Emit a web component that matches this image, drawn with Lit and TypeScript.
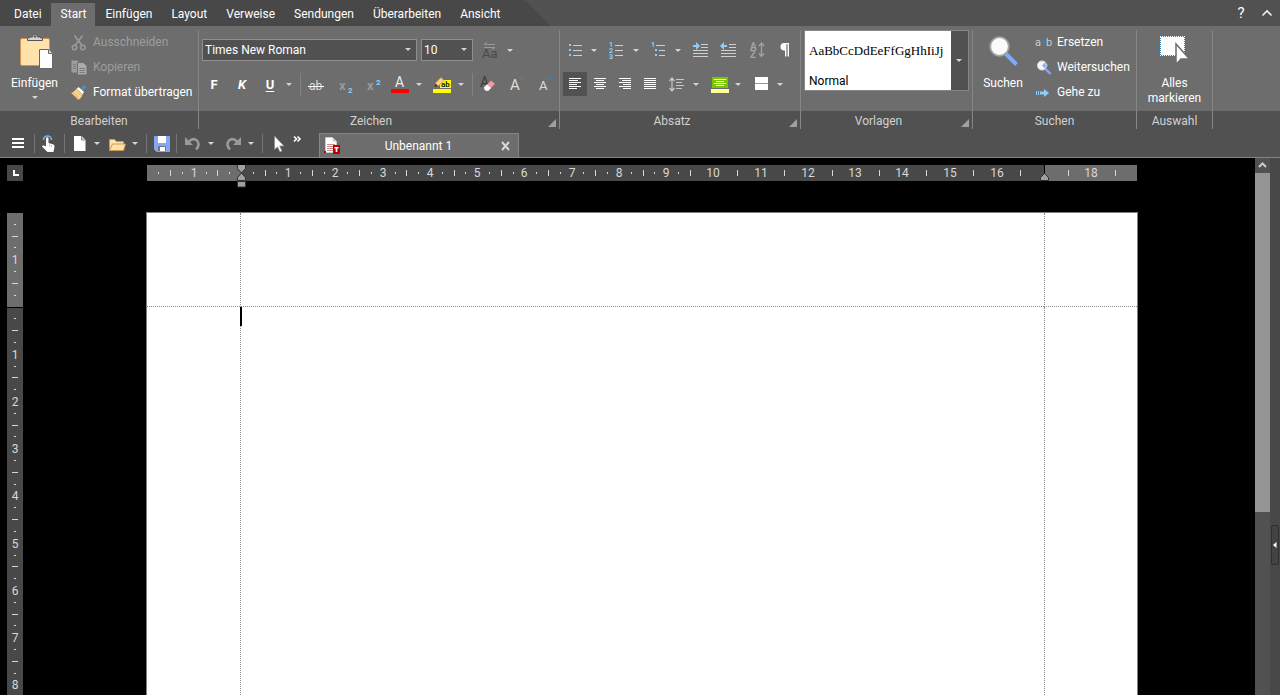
import { LitElement, html, svg, css } from 'lit';
import type { TemplateResult, SVGTemplateResult } from 'lit';
import { customElement, state } from 'lit/decorators.js';

const icon = (w: number, h: number, body: SVGTemplateResult) =>
  html`<svg width=${w} height=${h} viewBox="0 0 ${w} ${h}" aria-hidden="true">${body}</svg>`;

const lines = (rows: number[][], color: string) =>
  rows.map(([x, y, w]) => svg`<rect x=${x} y=${y} width=${w} height="1" fill=${color}/>`);

/* ---------- large ribbon icons (48 x 46) ---------- */
const bigPaste = icon(48, 46, svg`
  <rect x="9.500" y="8.500" width="29" height="27" rx="1.500" fill="#ffe3ab" stroke="#cf9550"/>
  <path d="M16.500 10.500v-2l3-1.500h2q0-3 2.500-3t2.500 3h2l3 1.500v2z" fill="#d4d4d4" stroke="#555"/>
  <circle cx="24" cy="6.500" r="1.200" fill="#555"/>
  <path d="M28.500 19.500h9l4 4v15h-13z" fill="#fff" stroke="#666"/>
  <path d="M37.500 19.500v4h4" fill="#ddd" stroke="#666"/>`);
const bigSearch = icon(48, 46, svg`
  <path d="M27 24l10.500 10.500" stroke="#82a8f8" stroke-width="4"/>
  <circle cx="20.500" cy="16.500" r="9.300" fill="#fafafa" stroke="#a3a3a3" stroke-width="1.800"/>`);
const bigSelect = icon(48, 46, svg`
  <rect x="9" y="6" width="25" height="20" fill="#fff"/>
  <rect x="9.500" y="6.500" width="24" height="19" fill="none" stroke="#2f7fb5" stroke-dasharray="1 1" shape-rendering="crispEdges"/>
  <path d="M25 14v20.500l5-5.500h8.500z" fill="#fff" stroke="#6d6d6d" stroke-width="1.500"/>`);

/* ---------- small ribbon icons (18 x 18) ---------- */
const cut = icon(18, 18, svg`<g fill="none" stroke="#9a9a9a" stroke-width="1.600">
  <path d="M3.500 1.500l7.500 10M11.500 1.500L4 11.500"/><circle cx="3.500" cy="13.500" r="2.200"/><circle cx="11.800" cy="13.500" r="2.200"/></g>`);
const copy = icon(18, 18, svg`<path d="M.5 1.500h6l3 3v9h-9z" fill="#9d9d9d"/>
  <path d="M6.500 3.500h6l3.500 3.500v9H6.500z" fill="#aaa" stroke="#6d6d6d"/>
  <path d="M2 5.500h3M2 7.500h3M2 9.500h3M8.500 9.500h5.500M8.500 11.500h5.500M8.500 13.500h5.500" stroke="#7c7c7c"/>`);
const brush = icon(18, 18, svg`<path d="M10.500 6l4-4" stroke="#4a90c8" stroke-width="3"/>
  <path d="M7.500 3l5.500 5-1.500 2.500L5.500 5z" fill="#fff"/>
  <path d="M5.500 5l6 5.500c-1 3-3 5-4.500 5L.5 9c1.500-.5 3-2 5-4z" fill="#ffdc9c" stroke="#d29a50" stroke-width=".8"/>
  <path d="M3 9l5 4M5.500 7.500l4 4M4 11.500l3 3" stroke="#d29a50" stroke-width=".7"/>`);
const replace = icon(18, 18, svg`<text x="0" y="12" font-size="11" fill="#ccc">a</text>
  <path d="M6 8.500h4M8 6l2.500 2.500L8 11" fill="none" stroke="#3c83b4" stroke-width="1.200"/>
  <text x="11" y="12" font-size="11" fill="#ccc">b</text>`);
const searchNext = icon(18, 18, svg`<path d="M10 9.500l5.500 5.500" stroke="#82a8f8" stroke-width="2.400"/>
  <circle cx="7" cy="6.500" r="4.500" fill="#f5f5f5" stroke="#ddd"/>
  <path d="M8 6.500h5M10.500 4L8 6.500L10.500 9" fill="none" stroke="#82a8f8" stroke-width="1.300"/>`);
const goTo = icon(18, 18, svg`<path d="M1 7h1v4H1zM3 7h1v4H3zM5 7.500h4V5l5 4-5 4v-2.500H5z" fill="#8ecdfb"/>`);

/* ---------- character icons (28 x 24) ---------- */
const changeCase = icon(28, 24, svg`<path d="M7 6.500h11M7 6.500l3-2.500M18 9.500H7M18 9.500l-3 2" stroke="#9a9a9a" fill="none"/>
  <text x="5" y="20" font-size="13" fill="#4a4a4a">Aa</text>`);
const strike = icon(28, 24, svg`<text x="7" y="18" font-size="12" fill="#ddd">ab</text><path d="M6 14.500h16" stroke="#fff"/>`);
const script = (y: number) => icon(28, 24, svg`<text x="9" y="18" font-size="13" font-weight="700" fill="#9a9a9a">x</text>
  <text x="18" y=${y} font-size="8" font-weight="700" fill="#8ecdfb">2</text>`);
const fontColor = icon(28, 24, svg`<text x="9" y="15" font-size="14" fill="#eee">A</text><rect x="5" y="17" width="18" height="4" fill="#f00"/>`);
const marker = icon(28, 24, svg`<rect x="12" y="8" width="11" height="8" fill="#ff0"/>
  <text x="13" y="15" font-size="8" font-weight="700" fill="#222">ab</text>
  <rect x="5" y="17" width="18" height="4" fill="#ff0"/>
  <path d="M6 15.500l2-5L13 5.500l3 3-5 5z" fill="#ffd28a" stroke="#c98f45" stroke-width=".8"/><path d="M6 15.500l1.500-4 2.500 2.500z" fill="#333"/>`);
const clearFormat = icon(28, 24, svg`<text x="6" y="15" font-size="14" fill="#3c3c3c">A</text>
  <path d="M10 15.500l7-7 4 3.500-7 7z" fill="#f29aa0"/><path d="M10 15.500l3-3 4 3.500-3 3q-4 0-4-3.500z" fill="#fff"/>`);
const resize = (plus: boolean) => icon(28, 24, svg`<text x=${plus ? 8 : 9} y="18" font-size=${plus ? 15 : 13} fill="#ddd">A</text>
  <path d=${plus ? 'M17 5.500h5M19.500 3v5' : 'M17 6.500h5'} stroke="#3c83b4" fill="none"/>`);

/* ---------- paragraph icons ---------- */
const bullets = icon(28, 24, svg`${[6, 11, 16].map(y => svg`<rect x="8" y=${y} width="2" height="2" fill="#8ecdfb"/>`)}
  ${lines([[12, 7, 9], [12, 12, 9], [12, 17, 9]], '#d0d0d0')}`);
const numbers = icon(28, 24, svg`${[1, 2, 3].map(n => svg`<text x="6" y=${3 + n * 6} font-size="7" font-weight="700" fill="#8ecdfb">${n}</text>`)}
  ${lines([[12, 7, 8], [12, 12, 8], [12, 17, 8]], '#d0d0d0')}`);
const outline = icon(28, 24, svg`<text x="6" y="9" font-size="7" font-weight="700" fill="#8ecdfb">1</text>
  ${[11, 16].map(y => svg`<rect x="10" y=${y} width="2" height="2" fill="#8ecdfb"/>`)}
  ${lines([[11, 7, 9], [14, 12, 6], [14, 17, 6]], '#d0d0d0')}`);
const indent = (dir: string) => icon(28, 24, svg`<path d=${dir} fill="#8ecdfb"/>
  ${lines([[14, 6, 7], [14, 9, 7], [6, 12, 15], [6, 15, 15], [6, 18, 15]], '#d0d0d0')}`);
const sort = icon(28, 24, svg`<text x="7" y="12" font-size="10" font-weight="700" fill="#a2a2a2">A</text><text x="7" y="20" font-size="10" font-weight="700" fill="#a2a2a2">Z</text>
  <path d="M18.500 5v13M16 8l2.500-3L21 8M16 15.500l2.500 3 2.500-3" fill="none" stroke="#a2a2a2" stroke-width="1.300"/>`);
const pilcrow = icon(28, 24, svg`<path d="M18 5v13.500h-1.400V6.300h-1.200v12.200H14V12.500h-.8a3.700 3.700 0 0 1 0-7.500H18z" fill="#fff"/>`);
const align = (xs: number[][]) => icon(24, 24, svg`${lines(xs.map(([x, w], i) => [x, 6 + i * 2, w]), '#fff')}`);
const alignLeft = align([[6, 12], [6, 9], [6, 12], [6, 8], [6, 12], [6, 8]]);
const alignCenter = align([[6, 12], [8, 8], [6, 12], [8, 8], [6, 12], [8, 8]]);
const alignRight = align([[6, 12], [9, 9], [6, 12], [10, 8], [6, 12], [10, 8]]);
const alignFull = align([[6, 12], [6, 12], [6, 12], [6, 12], [6, 12], [6, 12]]);
const spacing = icon(28, 24, svg`<path d="M9 6.500v12M6.500 9L9 6l2.500 3M6.500 16L9 19l2.500-3" fill="none" stroke="#c8c8c8" stroke-width="1.200"/>
  ${lines([[13, 7, 8], [13, 10, 6], [13, 13, 8], [13, 16, 6]], '#c8c8c8')}`);
const shading = icon(28, 24, svg`<rect x="7" y="5" width="16" height="11" fill="#76c800"/>
  ${lines([[9, 7, 12], [11, 9, 8], [9, 11, 12], [11, 13, 8]], '#fff')}<rect x="6" y="17" width="18" height="4" fill="#ffff9c"/>`);
const borders = icon(28, 24, svg`<rect x="8" y="5" width="13" height="13" fill="#fff"/><rect x="8" y="11" width="13" height="1" fill="#999"/>`);

/* ---------- quick access icons (24 x 24) ---------- */
const menu = icon(24, 24, svg`<path d="M6 6h12v2H6zM6 10h12v2H6zM6 14h12v2H6z" fill="#fff"/>`);
const touch = icon(24, 24, svg`<path d="M5.500 8a4 4 0 1 1 8 0" fill="none" stroke="#82a8f8" stroke-width="1.600"/>
  <path d="M8 6q1.500-1.500 2.500 0v5l5 1.500q1 .5 1 2l-1 5.500h-6L4 14.500q0-1.500 2-1l2 1z" fill="#fff"/>
  <path d="M11.500 12.500v2M13.500 13v2" stroke="#999" stroke-width=".7"/>`);
const newDoc = icon(24, 24, svg`<path d="M6 4h7.500l4 4v11H6z" fill="#fff"/><path d="M13.500 4v4h4" fill="#ccc" stroke="#777" stroke-width=".8"/>`);
const openDoc = icon(24, 24, svg`<path d="M3.500 18.500v-11h5l2 2h7v4" fill="#ffe3ab" stroke="#cf9550"/>
  <path d="M3.500 18.500l3-6.500h13l-2 6.500z" fill="#ffe3ab" stroke="#cf9550"/>`);
const save = icon(24, 24, svg`<path d="M4.500 4.500h15v15h-13l-2-2z" fill="#82a8f8" stroke="#86a4e6"/>
  <rect x="8" y="4" width="8" height="7" fill="#fff"/><rect x="8" y="14" width="8" height="5" fill="#777"/><rect x="10" y="15" width="5" height="4" fill="#fff"/>`);
const undo = icon(24, 24, svg`<path d="M7.500 10q4.500-5 8.500-1.500 3.500 4-1 9" fill="none" stroke="#999" stroke-width="2.600"/><path d="M4 5v8h8z" fill="#999"/>`);
const redo = icon(24, 24, svg`<path d="M16.500 10q-4.500-5-8.500-1.500-3.500 4 1 9" fill="none" stroke="#999" stroke-width="2.600"/><path d="M20 5v8h-8z" fill="#999"/>`);
const pointer = icon(24, 24, svg`<path d="M8.500 4v13.500l3-2.500 2.500 5 2-1-2.300-5H18z" fill="#fff" stroke="#888" stroke-width=".7"/>`);
const more = icon(14, 24, svg`<path d="M4 5.500l2.500 2.500L4 10.500M7.500 5.500L10 8l-2.500 2.500" fill="none" stroke="#fff" stroke-width="1.600"/>`);
const docIcon = icon(18, 18, svg`<path d="M2.500.5h7l4 4v11h-11z" fill="#fff" stroke="#ddd" stroke-width=".5"/><path d="M9.500.5v4h4" fill="#ccc"/>
  ${lines([[4, 7, 8], [4, 9, 6], [4, 11, 6], [4, 13, 6]], '#c88')}
  <rect x="1" y="14" width="2" height="2" fill="#c00000"/><rect x="10" y="8" width="7" height="9" fill="#c00000"/>
  <path d="M11.500 10h4v1.500h-1.200V15h-1.600v-3.500h-1.200z" fill="#fff"/>`);
const closeIcon = icon(12, 12, svg`<path d="M2 2l7 8M9 2l-7 8" stroke="#d8d8d8" stroke-width="2"/>`);

const arrow = (h = 24) => icon(14, h, svg`<path d=${`M2 ${h / 2 - 1}h6l-3 3z`} fill="#d4d4d4"/>`);
const downSmall = html`<svg class="chev" width="7" height="4" viewBox="0 0 7 4" aria-hidden="true"><path d="M0 0h6L3 3z" fill="#d4d4d4"/></svg>`;

const CM = 47.24;
const PAGE_TOP = 213;

@customElement('app-root')
export class AppRoot extends LitElement {
  static styles = css`
    :host {
      --bar: #515151;
      --panel: #6d6d6d;
      --dark: #484848;
      --line: #868686;
      display: flex; flex-direction: column; height: 100vh; overflow: hidden;
      background: #000; color: #fff;
      font: 12px/15px Roboto, "Open Sans", sans-serif;
    }
    * { box-sizing: border-box; }
    svg { display: block; flex: none; }
    button { font: inherit; color: inherit; background: none; border: 0; padding: 0; margin: 0; display: flex; align-items: center; justify-content: center; white-space: nowrap; flex: none; }
    button:disabled { color: #9d9d9d; }

    header { display: flex; align-items: stretch; height: 26px; background: var(--bar); flex: none; }
    nav { display: flex; align-items: flex-end; padding-left: 4px; background: var(--dark); }
    nav a { color: #fff; text-decoration: none; padding: 0 9px 0 10px; line-height: 22px; height: 23px; }
    nav a.on { background: var(--panel); }
    .grow { flex: 1; }
    .help { width: 26px; font-size: 15px; }

    .ribbon { display: grid; grid-template-columns: 199px 361px 241px 172px 164px 76px 1fr; padding-top: 4px; flex: none;
      background: linear-gradient(var(--panel) 85px, var(--bar) 85px); }
    section { border-right: 1px solid var(--line); display: flex; flex-direction: column; height: 99px; }
    .body { height: 81px; display: flex; }
    .rows { flex-direction: column; padding-top: 8px; gap: 10px; }
    .row { display: flex; align-items: center; height: 24px; }
    .foot { display: flex; align-items: flex-start; height: 18px; color: #d0d0d0; line-height: 20px; }
    .foot h2 { flex: 1; margin: 0; font: inherit; text-align: center; }
    .foot button { width: 16px; height: 18px; }
    .big { flex-direction: column; justify-content: flex-start; width: 69px; line-height: 15px; }
    .big.find { width: 60px; }
    .big.all { width: 75px; white-space: normal; }
    .list { display: flex; flex-direction: column; }
    .list button { height: 25px; padding-left: 2px; gap: 4px; justify-content: flex-start; }
    .chars { padding-left: 3px; }
    .effects { padding-left: 1px; }
    .paras { padding-left: 1px; }
    .aligns { padding-left: 3px; }
    .aligns .al { margin-right: 1px; }
    .al.on { background: var(--bar); }
    .ic { width: 28px; height: 24px; font-size: 13px; }
    .b { font-weight: 700; }
    .i { font-weight: 700; font-style: italic; }
    .u { font-weight: 700; text-decoration: underline; text-underline-offset: 2px; }
    .sep { width: 1px; height: 23px; background: #828282; margin: 0 1px 0 2px; flex: none; }
    .combo { display: grid; align-items: center; margin-right: 4px; }
    .combo select { grid-area: 1 / 1; appearance: none; width: 215px; height: 22px; border: 1px solid #8f8f8f; border-radius: 0; background: var(--bar); color: #fff; font: inherit; padding: 0 2px; }
    .combo select.size { width: 52px; }
    .combo .chev { grid-area: 1 / 1; justify-self: end; margin-right: 5px; pointer-events: none; }

    .styles { display: flex; width: 165px; height: 61px; margin-left: 3px; border: 1px solid var(--line); }
    .style { flex: 1; flex-direction: column; align-items: flex-start; justify-content: space-between; background: #fff; color: #000; padding: 12px 0 1px 4px; }
    .sample { font: 13px/16px "Liberation Serif", serif; }
    .pick { width: 17px; background: var(--bar); }

    .quick { display: flex; height: 29px; background: var(--bar); border-bottom: 1px solid var(--line); padding-left: 4px; flex: none; }
    .quick > button { width: 24px; height: 28px; padding-top: 2px; }
    .quick > .wide { width: 28px; }
    .quick > .mid { width: 26px; }
    .quick > .dd, .quick > .more { width: 14px; padding-top: 0; }
    .quick .line { width: 1px; height: 19px; margin: 5px 3px 0 2px; background: #757575; flex: none; }
    .tab { display: flex; align-items: center; width: 200px; height: 24px; align-self: flex-end; margin-left: 15px; padding: 1px 6px 0 3px; background: var(--panel); border: 1px solid var(--line); border-bottom: 0; }
    .tab span { flex: 1; text-align: center; padding: 1px 4px 0 0; }

    main { flex: 1; min-height: 0; display: grid; grid-template-columns: 29px 1fr 15px 10px; }
    .left { padding: 7px 0 0 7px; display: flex; flex-direction: column; gap: 32px; min-height: 0; overflow: hidden; }
    .stop { width: 16px; height: 16px; background: var(--dark); }
    .canvas { display: flex; flex-direction: column; align-items: center; padding-top: 7px; min-height: 0; overflow: hidden; }
    .canvas > svg { margin-bottom: 23px; }
    .page { flex: 1; width: 992px; background: #fff; border: 1px solid #7f7f7f; border-bottom: 0; display: grid; grid-template: 94px 1fr / 93px 804px 1fr; }
    .page > div { border: 0 dotted #8c8c8c; }
    .page .top { border-bottom-width: 1px; }
    .page .mid, .page .end { border-left-width: 1px; }
    .text { outline: 0; color: #000; }
    .caret { display: block; width: 2px; height: 19px; margin-left: -1px; background: #000; }

    .scroll { background: var(--bar); display: flex; flex-direction: column; }
    .scroll button { width: 15px; height: 15px; }
    .track { flex: 1; }
    .thumb { height: 65%; background: #959595; }
    .side { background: var(--dark); padding: 367px 1px 0 1px; }
    .side button { width: 8px; height: 40px; border: 1px solid #303030; border-radius: 2px; background: #434343; }
  `;

  @state() private viewHeight = window.innerHeight;

  private onResize = () => { this.viewHeight = window.innerHeight; };

  connectedCallback() {
    super.connectedCallback();
    window.addEventListener('resize', this.onResize);
  }

  disconnectedCallback() {
    window.removeEventListener('resize', this.onResize);
    super.disconnectedCallback();
  }

  private hRuler(): TemplateResult {
    const zero = 94.5;
    const marks: SVGTemplateResult[] = [];
    for (let q = -7; q <= 74; q++) {
      const x = Math.round(zero + (q * CM) / 4 - 0.5);
      const n = Math.abs(q / 4);
      if (q === 0 || n === 17) continue;
      if (q % 4 === 0) marks.push(svg`<text x=${x} y="12" text-anchor="middle">${n}</text>`);
      else if (q % 2 === 0) marks.push(svg`<rect x=${x} y="5" width="1" height="6"/>`);
      else if (n < 9.5) marks.push(svg`<rect x=${x} y="7" width="1" height="2"/>`);
    }
    return html`<svg width="990" height="24" viewBox="0 0 990 24" role="img" aria-label="Lineal">
      <rect width="94" height="16" fill="#6d6d6d"/><rect x="94" width="803" height="16" fill="#484848"/><rect x="898" width="92" height="16" fill="#6d6d6d"/>
      <g fill="#d8d8d8" font-size="12">${marks}</g>
      <g fill="#a0a0a0" stroke="#303030">
        <path d="M90.500 -.5h8v4l-4 4.500-4-4.500zM90.500 15.500v-3l4-4.500 4 4.500v3zM90.500 16.500h8v5.500h-8z"/>
        <path d="M893.500 15.500v-3l4-4 4 4v3z"/>
      </g></svg>`;
  }

  private vRuler(): TemplateResult {
    const zero = 94;
    const h = Math.max(this.viewHeight - PAGE_TOP, 120);
    const last = Math.floor(((h - zero - 4) * 4) / CM);
    const marks: SVGTemplateResult[] = [];
    for (let q = -7; q <= last; q++) {
      if (q === 0) continue;
      const y = Math.round(zero + (q * CM) / 4 - 0.5);
      if (q % 4 === 0) marks.push(svg`<text x="8" y=${y + 5} text-anchor="middle">${Math.abs(q / 4)}</text>`);
      else if (q % 2 === 0) marks.push(svg`<rect x="5" y=${y} width="6" height="1"/>`);
      else marks.push(svg`<rect x="7" y=${y} width="2" height="1"/>`);
    }
    return html`<svg width="16" height=${h} viewBox="0 0 16 ${h}" role="img" aria-label="Lineal">
      <rect width="16" height="94" fill="#6d6d6d"/><rect y="95" width="16" height=${h - 95} fill="#484848"/>
      <g fill="#d8d8d8" font-size="12">${marks}</g></svg>`;
  }

  private btn(name: string, content: unknown, cls = 'ic', disabled = false): TemplateResult {
    return html`<button class=${cls} aria-label=${name} ?disabled=${disabled}>${content}</button>`;
  }

  private foot(name: string, launcher = true): TemplateResult {
    return html`<div class="foot"><h2>${name}</h2>${launcher
      ? this.btn(name + ' – Optionen', icon(16, 18, svg`<path d="M13 8v8H5z" fill="#a0a0a0"/>`), '') : ''}</div>`;
  }

  render() {
    const dd = (name: string) => this.btn(name, arrow(), '');
    const tabs = ['Datei', 'Start', 'Einfügen', 'Layout', 'Verweise', 'Sendungen', 'Überarbeiten', 'Ansicht'];
    return html`
      <header>
        <nav>${tabs.map(t => html`<a href="#" class=${t === 'Start' ? 'on' : ''}>${t}</a>`)}</nav>
        ${icon(41, 26, svg`<path d="M0 0h12q5 1 9 6l20 20H0z" fill="#484848"/>`)}
        <span class="grow"></span>
        ${this.btn('Hilfe', '?', 'help')}
        ${this.btn('Menüband minimieren', icon(12, 12, svg`<path d="M1.500 8.500L6 4l4.500 4.500" fill="none" stroke="#eee" stroke-width="1.600"/>`), 'help')}
      </header>

      <div class="ribbon">
        <section>
          <div class="body">
            <button class="big">${bigPaste}Einfügen${icon(12, 12, svg`<path d="M3 5h6L6 8z" fill="#d4d4d4"/>`)}</button>
            <div class="list">
              <button disabled>${cut}Ausschneiden</button>
              <button disabled>${copy}Kopieren</button>
              <button>${brush}Format übertragen</button>
            </div>
          </div>
          ${this.foot('Bearbeiten', false)}
        </section>

        <section>
          <div class="body rows">
            <div class="row chars">
              <div class="combo"><select aria-label="Schriftart"><option>Times New Roman</option></select>${downSmall}</div>
              <div class="combo"><select class="size" aria-label="Schriftgröße"><option>10</option></select>${downSmall}</div>
              ${this.btn('Groß-/Kleinschreibung', changeCase, 'ic', true)}${dd('Schreibweisen')}
            </div>
            <div class="row effects">
              ${this.btn('Fett', 'F', 'ic b')}${this.btn('Kursiv', 'K', 'ic i')}${this.btn('Unterstrichen', 'U', 'ic u')}${dd('Unterstreichungsarten')}
              <i class="sep"></i>
              ${this.btn('Durchgestrichen', strike)}${this.btn('Tiefgestellt', script(21))}${this.btn('Hochgestellt', script(13))}
              ${this.btn('Schriftfarbe', fontColor)}${dd('Schriftfarben')}
              ${this.btn('Hervorheben', marker)}${dd('Hervorhebungsfarben')}
              <i class="sep"></i>
              ${this.btn('Formatierung löschen', clearFormat)}${this.btn('Schrift vergrößern', resize(true))}${this.btn('Schrift verkleinern', resize(false))}
            </div>
          </div>
          ${this.foot('Zeichen')}
        </section>

        <section>
          <div class="body rows">
            <div class="row paras">
              ${this.btn('Aufzählung', bullets)}${dd('Aufzählungsarten')}${this.btn('Nummerierung', numbers)}${dd('Nummerierungsarten')}
              ${this.btn('Gliederung', outline)}${dd('Gliederungsarten')}
              ${this.btn('Einzug vergrößern', indent('M6 7h3V4l4 4-4 4V9H6z'))}${this.btn('Einzug verkleinern', indent('M12 7H9V4L5 8l4 4V9h3z'))}
              ${this.btn('Sortieren', sort)}${this.btn('Absatzmarken', pilcrow)}
            </div>
            <div class="row aligns">
              ${this.btn('Linksbündig', alignLeft, 'al on')}${this.btn('Zentriert', alignCenter, 'al')}${this.btn('Rechtsbündig', alignRight, 'al')}${this.btn('Blocksatz', alignFull, 'al')}
              ${this.btn('Zeilenabstand', spacing)}${dd('Zeilenabstände')}${this.btn('Schattierung', shading)}${dd('Schattierungen')}${this.btn('Umrandung', borders)}${dd('Umrandungen')}
            </div>
          </div>
          ${this.foot('Absatz')}
        </section>

        <section>
          <div class="body">
            <div class="styles">
              <button class="style"><span class="sample">AaBbCcDdEeFfGgHhIiJj</span><span>Normal</span></button>
              ${this.btn('Weitere Vorlagen', downSmall, 'pick')}
            </div>
          </div>
          ${this.foot('Vorlagen')}
        </section>

        <section>
          <div class="body">
            <button class="big find">${bigSearch}Suchen</button>
            <div class="list">
              <button>${replace}Ersetzen</button>
              <button>${searchNext}Weitersuchen</button>
              <button>${goTo}Gehe zu</button>
            </div>
          </div>
          ${this.foot('Suchen', false)}
        </section>

        <section>
          <div class="body"><button class="big all">${bigSelect}Alles markieren</button></div>
          ${this.foot('Auswahl', false)}
        </section>
      </div>

      <div class="quick">
        ${this.btn('Menü', menu, 'wide')}<i class="line"></i>
        ${this.btn('Fingermodus', touch, '')}<i class="line"></i>
        ${this.btn('Neu', newDoc, '')}${this.btn('Neu aus Vorlage', arrow(28), 'dd')}
        ${this.btn('Öffnen', openDoc, '')}${this.btn('Zuletzt geöffnet', arrow(28), 'dd')}<i class="line"></i>
        ${this.btn('Speichern', save, '')}<i class="line"></i>
        ${this.btn('Rückgängig', undo, 'mid')}${this.btn('Rückgängig-Liste', arrow(28), 'dd')}
        ${this.btn('Wiederherstellen', redo, 'mid')}${this.btn('Wiederherstellen-Liste', arrow(28), 'dd')}<i class="line"></i>
        ${this.btn('Objektmodus', pointer, '')}${this.btn('Mehr', more, 'more')}
        <div class="tab">${docIcon}<span>Unbenannt 1</span>${this.btn('Schließen', closeIcon, '')}</div>
      </div>

      <main>
        <div class="left">
          ${this.btn('Tabulator', icon(16, 16, svg`<path d="M6 5h2v4h4v2H6z" fill="#fff"/>`), 'stop')}
          ${this.vRuler()}
        </div>
        <div class="canvas">
          ${this.hRuler()}
          <div class="page">
            <div class="top"></div><div class="top mid"></div><div class="top end"></div>
            <div></div>
            <div class="mid text" role="textbox" aria-label="Dokument" tabindex="0"><span class="caret"></span></div>
            <div class="end"></div>
          </div>
        </div>
        <div class="scroll">
          ${this.btn('Nach oben', icon(15, 15, svg`<path d="M4 9l3.500-3.500L11 9" fill="none" stroke="#ccc" stroke-width="2"/>`), '')}
          <div class="track"><div class="thumb"></div></div>
        </div>
        <div class="side">${this.btn('Seitenleiste', icon(6, 8, svg`<path d="M4.500 1v6L1 4z" fill="#fff"/>`), '')}</div>
      </main>`;
  }
}
